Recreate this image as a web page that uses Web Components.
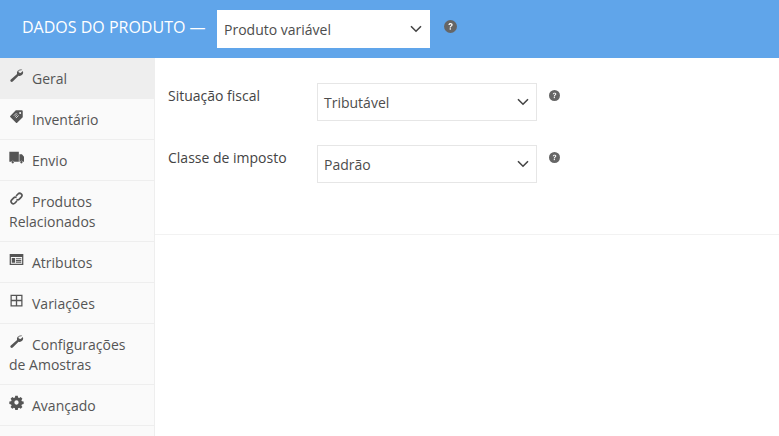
<!DOCTYPE html>
<html lang="pt">
<head>
<title>Dados do produto</title>
<style>
  html, body { margin: 0; padding: 0; background: #fff; }
  body { font-family: "Open Sans", sans-serif; color: #555; overflow: hidden; height: 436px; }
</style>
</head>
<body>

<product-panel>
  <panel-header slot="header"></panel-header>

  <side-tab slot="tabs" active icon="wrench">Geral</side-tab>
  <side-tab slot="tabs" icon="tag">Inventário</side-tab>
  <side-tab slot="tabs" icon="truck">Envio</side-tab>
  <side-tab slot="tabs" icon="link">Produtos Relacionados</side-tab>
  <side-tab slot="tabs" icon="list">Atributos</side-tab>
  <side-tab slot="tabs" icon="grid">Variações</side-tab>
  <side-tab slot="tabs" icon="wrench">Configurações de Amostras</side-tab>
  <side-tab slot="tabs" icon="gear">Avançado</side-tab>

  <form-row label="Situação fiscal" value="Tributável"></form-row>
  <form-row label="Classe de imposto" value="Padrão"></form-row>
</product-panel>

<script>
  const ICONS = {
    wrench: '<path d="M16 2.300c-1.700-.9-3.900-.6-5.200.8-1.100 1.100-1.500 2.600-1.100 4.100L2.200 13.900c-.8.8-.8 1.800-.1 2.400.7.7 1.700.6 2.400-.1l7-6.900c1.500.5 3.200.1 4.300-1.100 1.200-1.300 1.500-3.100.8-4.700l-2.600 2.600-2.200-.6-.6-2.100z"/>',
    tag: '<path d="M8.200 1.600 1.500 8.300c-.4.4-.4 1 0 1.400l6.900 6.800c.4.4 1 .4 1.400 0l6.700-6.700V2.900c0-.7-.6-1.300-1.300-1.300zM13.400 3.500a1.200 1.200 0 1 1 0 2.400 1.200 1.200 0 0 1 0-2.400z"/><path d="M5.800 8.100 9 4.900M7 9.500l3.200-3.200M8.300 10.900l3.200-3.200" stroke="#fafafa" stroke-width=".9" fill="none"/>',
    truck: '<path d="M.4 2.200h11.400v12H6.300a1.900 1.900 0 0 0-3.500 0H.4zM12.500 5h3l2.500 3.200v6h-1.300a1.900 1.900 0 0 0-3.500 0h-.7z"/><circle cx="4.500" cy="14.700" r="1.400"/><circle cx="14.900" cy="14.700" r="1.400"/>',
    link: '<g fill="none" stroke="currentColor" stroke-width="2"><path d="M8.500 6l2.300-2.400a2.700 2.700 0 0 1 3.900 3.800l-2.300 2.400a2.700 2.700 0 0 1-3.500.4"/><path d="M9.500 12l-2.300 2.400a2.700 2.700 0 0 1-3.900-3.800l2.300-2.400a2.700 2.700 0 0 1 3.500-.4"/></g>',
    list: '<path fill-rule="evenodd" d="M.8 2.500h16.400v13H.8zM2.300 6v8h13.400V6zM3.300 7.200h4v5.600h-4zM8.300 7.400h6.500v1.400H8.300zM8.300 9.500h6.500v1.300H8.300zM8.300 11.500h6.500v1.300H8.300z"/>',
    grid: '<path fill-rule="evenodd" d="M1.800 2.200h14.400v14H1.800zM3.300 3.700v4.500h4.900V3.700zM9.800 3.700v4.500h4.900V3.700zM3.300 9.800v4.900h4.900V9.800zM9.800 9.800v4.900h4.900V9.800z"/>',
    gear: '<path fill-rule="evenodd" d="M7.500 .8h3l.4 2.100 1.300.6 1.800-1.200 2.100 2.100-1.200 1.800.6 1.300 2.100.4v3l-2.100.4-.6 1.300 1.200 1.800-2.100 2.100-1.800-1.200-1.300.6-.4 2.100h-3l-.4-2.100-1.300-.6-1.800 1.200-2.100-2.100 1.200-1.800-.6-1.300-2.100-.4v-3l2.100-.4.6-1.300-1.200-1.800 2.100-2.100 1.800 1.200 1.300-.6zM9 6.400a2.600 2.600 0 1 0 0 5.200 2.600 2.600 0 0 0 0-5.200z"/>'
  };

  class ProductPanel extends HTMLElement {
    constructor() {
      super();
      const shadow = this.attachShadow({ mode: 'open' });
      shadow.innerHTML = `
        <style>
          :host { display: block; width: 779px; height: 436px; overflow: hidden; }
          .body { display: flex; height: 378px; }
          nav { width: 154px; background: #fafafa; border-right: 1px solid #eee; flex: none; }
          main { flex: 1; min-width: 0; }
          .fields { padding: 25px 0 0 13px; border-bottom: 1px solid #f2f2f2; display: flex; flex-direction: column; gap: 24px; height: 151px; }
        </style>
        <slot name="header"></slot>
        <div class="body">
          <nav><slot name="tabs"></slot></nav>
          <main><div class="fields"><slot></slot></div></main>
        </div>`;
    }
  }

  class PanelHeader extends HTMLElement {
    constructor() {
      super();
      const shadow = this.attachShadow({ mode: 'open' });
      shadow.innerHTML = `
        <style>
          :host { display: flex; height: 58px; background: #60a5ea; align-items: flex-start; padding-left: 22px; box-sizing: border-box; }
          h2 { margin: 0; font: 400 16px/54px "Open Sans", sans-serif; color: #fff; width: 195px; flex: none; white-space: nowrap; }
          pick-box { margin-top: 10px; --box-w: 213px; --box-border: #fff; --box-bg: #fff; }
          help-dot { margin: 20px 0 0 14px; }
        </style>
        <h2>DADOS DO PRODUTO —</h2>
        <pick-box value="Produto variável"></pick-box>
        <help-dot></help-dot>`;
    }
  }

  class SideTab extends HTMLElement {
    constructor() {
      super();
      const shadow = this.attachShadow({ mode: 'open' });
      const icon = ICONS[this.getAttribute('icon')];
      shadow.innerHTML = `
        <style>
          :host { display: block; padding: 11px 9px 9px; font: 400 14px/20px "Open Sans", sans-serif; color: #555; border-bottom: 1px solid #eee; }
          :host([active]) { background: #eee; }
          svg { width: 15px; height: 15px; fill: #555; color: #555; margin-right: 8px; vertical-align: -1px; position: relative; top: -2px; }
        </style>
        <svg viewBox="0 0 18 18">${icon}</svg><slot></slot>`;
    }
  }

  class FormRow extends HTMLElement {
    constructor() {
      super();
      const shadow = this.attachShadow({ mode: 'open' });
      shadow.innerHTML = `
        <style>
          :host { display: flex; align-items: flex-start; }
          label { width: 149px; flex: none; font: 400 14px/20px "Open Sans", sans-serif; color: #444; padding-top: 3px; }
          help-dot { margin: 7px 0 0 12px; --dot: 11px; }
        </style>
        <label>${this.getAttribute('label')}</label>
        <pick-box value="${this.getAttribute('value')}"></pick-box>
        <help-dot></help-dot>`;
    }
  }

  class PickBox extends HTMLElement {
    constructor() {
      super();
      const shadow = this.attachShadow({ mode: 'open' });
      shadow.innerHTML = `
        <style>
          :host { display: flex; align-items: center; justify-content: space-between; box-sizing: border-box; width: var(--box-w, 220px); height: 38px; padding: 0 7px 0 6px; background: var(--box-bg, #fff); border: 1px solid var(--box-border, #e6e6e6); font: 400 14px/20px "Open Sans", sans-serif; color: #4d4d4d; flex: none; }
          span { padding-top: 2px; }
          svg { width: 12px; height: 8px; fill: none; stroke: #444; stroke-width: 1.6; }
        </style>
        <span>${this.getAttribute('value')}</span>
        <svg viewBox="0 0 12 8"><path d="M1 1.200 6 6.200 11 1.200"/></svg>`;
    }
  }

  class HelpDot extends HTMLElement {
    constructor() {
      super();
      const shadow = this.attachShadow({ mode: 'open' });
      shadow.innerHTML = `
        <style>
          :host { display: block; flex: none; width: var(--dot, 13px); height: var(--dot, 13px); }
          svg { display: block; width: 100%; height: 100%; }
        </style>
        <svg viewBox="0 0 20 20"><circle cx="10" cy="10" r="10" fill="#666"/><path d="M6.800 7.600c.2-1.800 1.500-2.800 3.300-2.800 1.900 0 3.200 1.100 3.200 2.600 0 2.400-2.700 2.300-2.700 4.200H8.700c0-2.800 2.600-2.800 2.600-4.100 0-.6-.5-1-1.200-1-.8 0-1.300.5-1.400 1.300z" fill="#fff"/><rect x="8.700" y="12.700" width="2" height="2.100" fill="#fff"/></svg>`;
    }
  }

  customElements.define('help-dot', HelpDot);
  customElements.define('pick-box', PickBox);
  customElements.define('form-row', FormRow);
  customElements.define('side-tab', SideTab);
  customElements.define('panel-header', PanelHeader);
  customElements.define('product-panel', ProductPanel);
</script>
</body>
</html>
